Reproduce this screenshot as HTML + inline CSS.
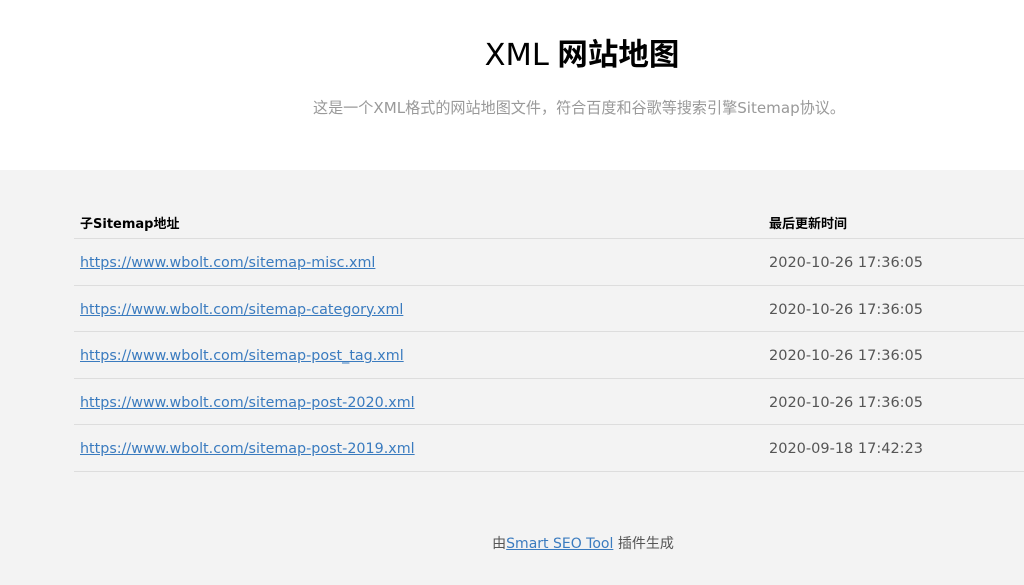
<!DOCTYPE html>
<html><head><meta charset="utf-8"><style>
body{margin:0;width:1024px;height:585px;overflow:hidden;background:#f3f3f3;font-family:"DejaVu Sans","Noto Sans CJK SC",sans-serif;}
.top{background:#fff;height:170px;position:relative}
h1{position:absolute;top:30px;left:0;width:1164px;text-align:center;margin:0;font-size:30.5px;font-weight:bold;color:#000;font-family:"Liberation Sans","Noto Sans CJK SC",sans-serif}
h1 .x{font-weight:normal;font-family:"DejaVu Sans",sans-serif}
.sub{position:absolute;top:96px;left:0;width:1158px;text-align:center;font-size:15.1px;color:#999;font-family:"DejaVu Sans","Noto Sans CJK SC",sans-serif}
.tbl{position:absolute;left:74px;top:170px;width:950px}
.hd{height:68px;border-bottom:1px solid #ddd;position:relative;font-size:13px;font-weight:bold;color:#000}
.hd span{position:absolute;top:43px}
.row{height:45.6px;border-bottom:1px solid #ddd;position:relative;font-size:14.3px}
.row a{position:absolute;left:6px;top:16px;color:#3a7bbf;text-decoration:underline}
.row .d{position:absolute;left:695px;top:16px;color:#555;font-size:14.5px}
.ft{position:absolute;top:533px;left:0;width:1166px;text-align:center;font-size:14px;color:#555}
.ft a{color:#3a7bbf;text-decoration:underline}
</style></head><body>
<div class="top"><h1><span class="x">XML</span> 网站地图</h1>
<div class="sub">这是一个XML格式的网站地图文件，符合百度和谷歌等搜索引擎Sitemap协议。</div></div>
<div class="tbl">
<div class="hd"><span style="left:6px">子Sitemap地址</span><span style="left:695px">最后更新时间</span></div>
<div class="row"><a>https://www.wbolt.com/sitemap-misc.xml</a><span class="d">2020-10-26 17:36:05</span></div>
<div class="row"><a>https://www.wbolt.com/sitemap-category.xml</a><span class="d">2020-10-26 17:36:05</span></div>
<div class="row"><a>https://www.wbolt.com/sitemap-post_tag.xml</a><span class="d">2020-10-26 17:36:05</span></div>
<div class="row"><a>https://www.wbolt.com/sitemap-post-2020.xml</a><span class="d">2020-10-26 17:36:05</span></div>
<div class="row"><a>https://www.wbolt.com/sitemap-post-2019.xml</a><span class="d">2020-09-18 17:42:23</span></div>
</div>
<div class="ft">由<a>Smart SEO Tool</a> 插件生成</div>
</body></html>
